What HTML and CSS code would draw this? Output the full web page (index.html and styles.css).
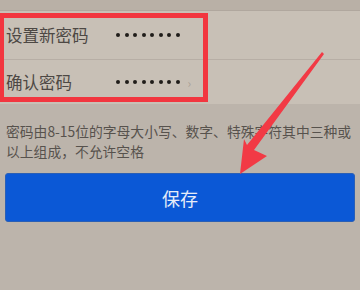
FILE: index.html
```html
<!DOCTYPE html>
<html lang="zh-CN">
<head>
  <meta charset="utf-8">
  <title>设置新密码</title>
  <link rel="stylesheet" href="styles.css">
</head>
<body>
  <div class="topbar"></div>

  <ul class="list">
    <li class="row row-first">
      <span class="label">设置新密码</span>
      <span class="dots"><i></i><i></i><i></i><i></i><i></i><i></i><i></i><i></i></span>
    </li>
    <li class="row row-second">
      <span class="label">确认密码</span>
      <span class="dots"><i></i><i></i><i></i><i></i><i></i><i></i><i></i><i></i></span>
      <span class="clear">›</span>
    </li>
  </ul>

  <p class="hint">密码由8-15位的字母大小写、数字、特殊字符其中三种或以上组成，不允许空格</p>

  <button class="save" type="button">保存</button>

  <!-- annotations drawn over the screenshot -->
  <div class="mark-box"></div>
  <svg class="mark-arrow" width="360" height="290" viewBox="0 0 360 290">
    <polygon points="322,52 324,54 254,150 267,156 240,174 244,139 247,145" fill="#f23a45"/>
  </svg>
</body>
</html>
```

FILE: styles.css
```css
body {
  margin: 0;
  background-color: #bcb4ab;
  font-family: "Noto Sans CJK SC", "Noto Sans", sans-serif;
  width: 360px;
  height: 290px;
  overflow: hidden;
  position: relative;
}

.topbar {
  height: 10px;
  background-color: #b9b0a6;
  border-bottom: 1px solid #b0a79e;
}

.list {
  list-style: none;
  margin: 0;
  padding: 0;
  background-color: #c8c0b6;
}

.row {
  display: flex;
  align-items: center;
  padding-left: 6px;
  color: #4d4844;
  font-size: 16.5px;
}

.row-first {
  height: 48px;
  border-bottom: 1px solid #b7aea5;
}

.row-second {
  height: 44px;
}

.label {
  width: 110px;
}

.dots {
  display: flex;
  gap: 4.5px;
}

.dots i {
  width: 4px;
  height: 4px;
  border-radius: 50%;
  background-color: #1f1c19;
}

.clear {
  margin-left: 8px;
  font-size: 12px;
  color: #aaa196;
}

.hint {
  margin: 0;
  padding: 17px 6px 0;
  font-size: 13.8px;
  line-height: 20px;
  color: #57524d;
}

.save {
  display: block;
  margin: 12px 0 0 5px;
  width: 350px;
  height: 49px;
  border: 1px solid #2a5fb5;
  border-radius: 3px;
  background-color: #0b58d6;
  color: #e6ecf8;
  font-family: inherit;
  font-size: 18px;
}

.mark-box {
  position: absolute;
  left: -1px;
  top: 13px;
  width: 199px;
  height: 79px;
  border: 5px solid #f2363f;
}

.mark-arrow {
  position: absolute;
  left: 0;
  top: 0;
}
```
